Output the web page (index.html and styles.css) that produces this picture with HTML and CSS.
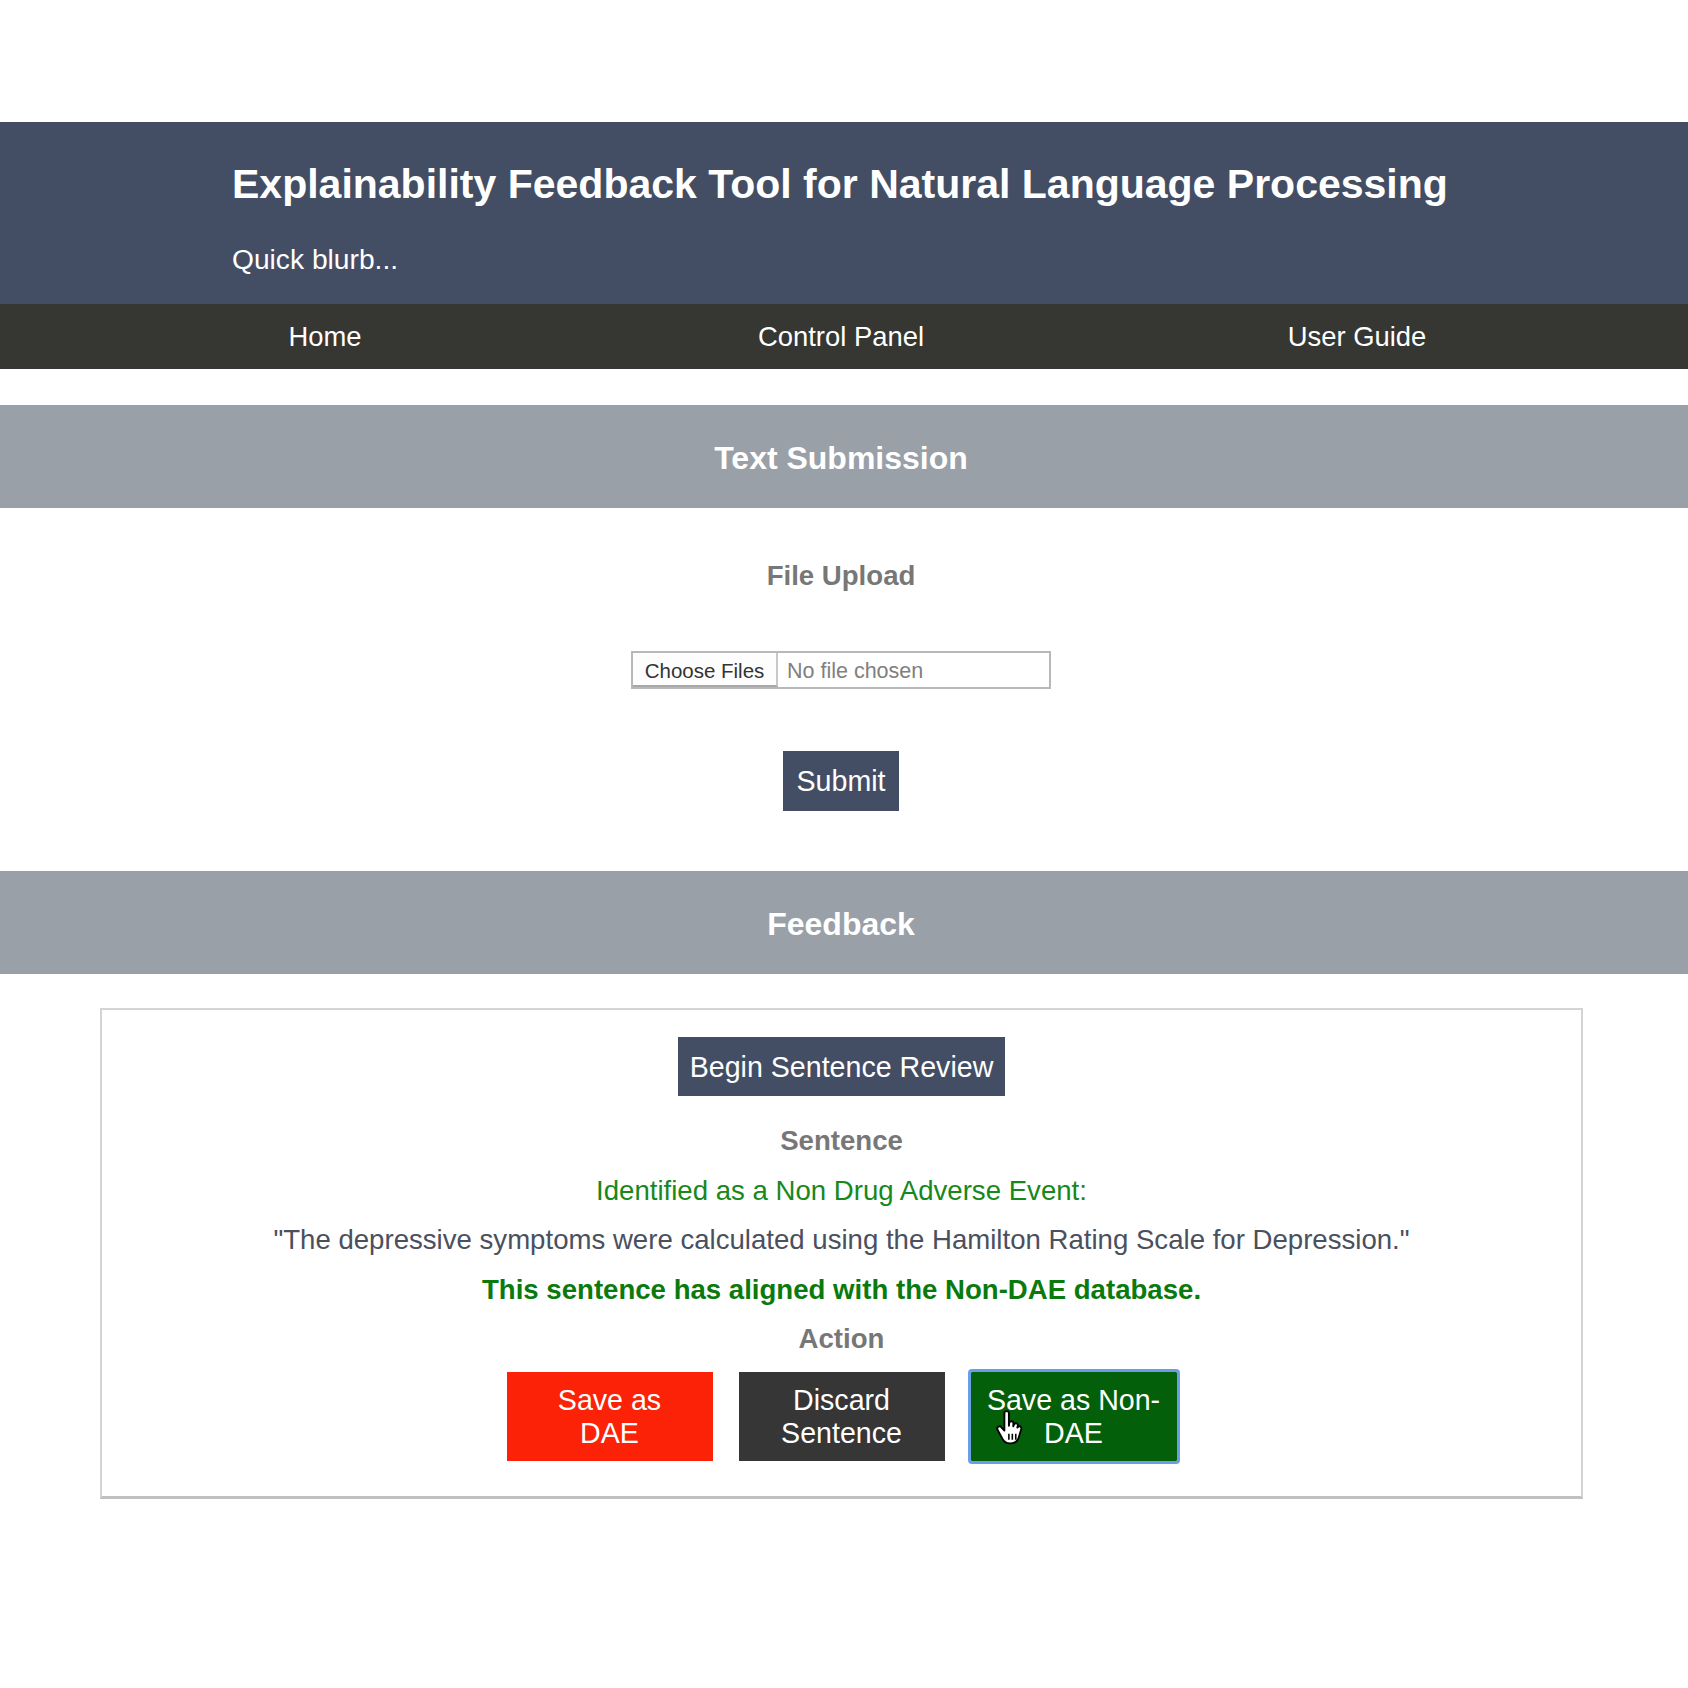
FILE: index.html
```html
<!DOCTYPE html>
<html lang="en">
<head>
<meta charset="utf-8">
<title>Explainability Feedback Tool</title>
<link rel="stylesheet" href="styles.css">
</head>
<body>
<div class="top-space"></div>
<header class="site-header">
  <h1 class="title">Explainability Feedback Tool for Natural Language Processing</h1>
  <p class="blurb">Quick blurb...</p>
</header>
<nav class="nav">
  <a class="nav-link">Home</a>
  <a class="nav-link">Control Panel</a>
  <a class="nav-link">User Guide</a>
</nav>

<section class="section">
  <h2 class="section-bar">Text Submission</h2>
  <div class="upload">
    <h4 class="label">File Upload</h4>
    <div class="file-input">
      <span class="file-btn">Choose Files</span>
      <span class="file-name">No file chosen</span>
    </div>
    <button class="btn-primary submit">Submit</button>
  </div>
</section>

<section class="section">
  <h2 class="section-bar">Feedback</h2>
  <div class="review-box">
    <button class="btn-primary begin">Begin Sentence Review</button>
    <div class="lines">
      <p class="label">Sentence</p>
      <p class="identified">Identified as a Non Drug Adverse Event:</p>
      <p class="quote">"The depressive symptoms were calculated using the Hamilton Rating Scale for Depression."</p>
      <p class="aligned">This sentence has aligned with the Non-DAE database.</p>
      <p class="label">Action</p>
    </div>
    <div class="actions">
      <button class="act red">Save as<br>DAE</button>
      <button class="act dark">Discard<br>Sentence</button>
      <button class="act green">Save as Non-<br>DAE
        <svg class="cursor" viewBox="0 0 24 28" width="32" height="37" aria-hidden="true">
          <path d="M7 2.5c0-1 .8-1.7 1.7-1.7s1.7.7 1.7 1.7V12l.3-2.2c.2-.9 1-1.4 1.8-1.3.9.1 1.4.9 1.3 1.8l-.1 2 .6-1.3c.4-.8 1.200-1.1 2-.8.7.3 1 1.1.8 1.9l-.3 1.2.7-.6c.7-.5 1.6-.4 2.1.3.4.6.3 1.3 0 2l-1.7 5.6c-.8 2.7-3.2 4.6-6 4.6H11c-2.2 0-4.2-1.2-5.3-3.1L1.9 15c-.5-.8-.3-1.8.5-2.3.8-.5 1.8-.3 2.3.4L7 15.6z" fill="#fff" stroke="#000" stroke-width="1.4" stroke-linejoin="round"/>
          <path d="M10.4 18v4.5M13 18v4.5M15.6 18v4.5" stroke="#000" stroke-width="1.2" fill="none"/>
        </svg>
      </button>
    </div>
  </div>
</section>
</body>
</html>
```

FILE: styles.css
```css
* { box-sizing: border-box; }

body {
  margin: 0;
  background: #ffffff;
  font-family: "Liberation Sans", Arial, Helvetica, sans-serif;
  font-size: 27.6px;
  color: #333;
}

.top-space { height: 122px; }

.site-header {
  background: #434e64;
  color: #ffffff;
  padding: 38px 0 29px 232px;
}

.title {
  margin: 0;
  font-size: 41px;
  line-height: 48px;
  font-weight: bold;
}

.blurb {
  margin: 35px 0 0;
  font-size: 28.2px;
  line-height: 32px;
}

.nav {
  background: #363633;
  height: 65px;
  display: grid;
  grid-template-columns: repeat(3, 516px);
  justify-content: center;
  align-items: center;
  padding-right: 6px;
}

.nav-link {
  color: #ffffff;
  text-align: center;
  font-size: 27.4px;
  line-height: 32px;
}

.section { padding-top: 36px; }
.section + .section { padding-top: 60px; }

.section-bar {
  margin: 0;
  height: 103px;
  background: #99a0a8;
  color: #ffffff;
  font-size: 32px;
  font-weight: bold;
  display: flex;
  align-items: center;
  justify-content: center;
  padding: 4px 6px 0 0;
}

.upload {
  display: flex;
  flex-direction: column;
  align-items: center;
  padding-right: 6px;
}

.label {
  margin: 0;
  color: #777777;
  font-size: 27.6px;
  line-height: 32px;
  font-weight: bold;
}

.upload .label { margin-top: 52px; }

.file-input {
  margin-top: 59px;
  width: 420px;
  height: 38px;
  border: 2px solid #b8b8b8;
  display: flex;
  align-items: stretch;
  font-size: 20.5px;
  background: #fff;
}

.file-btn {
  width: 145px;
  border-right: 2px solid #c8c8c8;
  border-bottom: 2px solid #a8a8a8;
  display: flex;
  align-items: center;
  justify-content: center;
  padding-top: 3px;
  color: #333;
  background: #fdfdfd;
}

.file-name {
  padding: 3px 0 0 9px;
  display: flex;
  align-items: center;
  color: #808080;
  font-size: 21.5px;
}

.btn-primary {
  background: #434e64;
  color: #ffffff;
  border: none;
  font-family: inherit;
  font-size: 28.6px;
  line-height: 32px;
  padding: 14px 14px;
  cursor: pointer;
}

.submit {
  margin-top: 62px;
  width: 116px;
  height: 60px;
  padding: 0;
}

.review-box {
  margin: 34px 105px 0 100px;
  border: 2px solid #d2d4d6;
  border-bottom: 3px solid #c0c0c0;
  display: flex;
  flex-direction: column;
  align-items: center;
  padding: 27px 0 35px;
}

.begin {
  width: 327px;
  height: 59px;
  padding: 0;
}

.lines {
  margin-top: 29px;
  display: flex;
  flex-direction: column;
  align-items: center;
  gap: 17.5px;
}

.lines p {
  margin: 0;
  line-height: 32px;
  font-size: 27.6px;
}

.identified { color: #17881b; }
.quote { color: #4a505e; }
.aligned { color: #0a7a0c; font-weight: bold; }

.actions {
  margin-top: 17px;
  display: flex;
  gap: 26px;
}

.act {
  position: relative;
  width: 206px;
  height: 89px;
  border: none;
  color: #ffffff;
  font-family: inherit;
  font-size: 28.6px;
  line-height: 33px;
  padding: 0 6px;
  text-align: center;
}

.red { background: #fb2208; }
.dark { background: #363636; }
.green {
  background: #045f0a;
  outline: 3px solid #6a9fe6;
  outline-offset: 0;
  border-radius: 1px;
}

.cursor {
  position: absolute;
  left: 24px;
  top: 38px;
}
```
